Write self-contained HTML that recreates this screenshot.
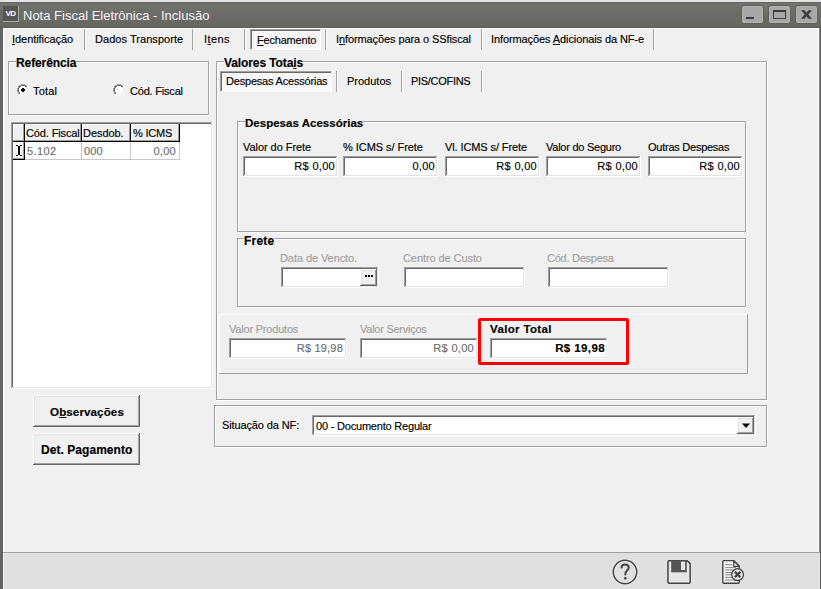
<!DOCTYPE html>
<html><head><meta charset="utf-8"><title>Nota Fiscal Eletrônica - Inclusão</title>
<style>
html,body{margin:0;padding:0;}
body{width:821px;height:589px;overflow:hidden;position:relative;background:#f0f0f0;font-family:"Liberation Sans",sans-serif;font-size:11px;color:#000}
.a{position:absolute}
.t{position:absolute;white-space:pre;line-height:normal;-webkit-text-stroke:0.15px currentColor}
u{text-decoration:underline;text-underline-offset:1px}
</style></head><body>
<div class="a" style="left:0px;top:0px;width:821px;height:2px;background:#e4e4e4"></div>
<div class="a" style="left:0px;top:2px;width:821px;height:26px;background:linear-gradient(#656565 0,#656565 1px,#72726e 1px,#6b6b67 50%,#656561 calc(100% - 1px),#5c5c58 calc(100% - 1px))"></div>
<div class="a" style="left:0px;top:28px;width:3px;height:561px;background:#646464"></div>
<div class="a" style="left:819px;top:28px;width:2px;height:561px;background:#5c5c5c"></div>
<div class="a" style="left:3px;top:28px;width:816px;height:524px;background:#f0f0f0"></div>
<div class="a" style="left:3px;top:28px;width:816px;height:1px;background:#fff"></div>
<div class="a" style="left:3px;top:28px;width:1px;height:524px;background:#fff"></div>
<div class="a" style="left:3px;top:552px;width:816px;height:37px;background:#e0e0e0"></div>
<div class="a" style="left:3px;top:552px;width:816px;height:1px;background:#a0a0a0"></div>
<div class="a" style="left:3px;top:553px;width:1px;height:36px;background:#f0f0f0"></div>
<div class="a" style="left:818px;top:29px;width:1px;height:523px;background:#f5f5f5"></div>
<div class="a" style="left:819px;top:28px;width:1px;height:524px;background:#8a8a8a"></div>
<div class="a" style="left:819px;top:553px;width:1px;height:36px;background:#e8e8e8"></div>
<div class="a" style="left:819px;top:552px;width:1px;height:1px;background:#a0a0a0"></div>
<div class="a" style="left:3px;top:6px;width:15px;height:15px;background:#555;border-right:1px solid #aaa;border-bottom:1px solid #aaa;color:#fff;font-size:8px;font-weight:700;line-height:16px;text-align:center;letter-spacing:-0.6px">VD</div>
<span class="t" style="left:23px;top:8px;font-size:13px;color:#f4f4f4;-webkit-text-stroke:0;">Nota Fiscal Eletrônica - Inclusão</span>
<div class="a" style="left:741px;top:5px;width:23px;height:19px;box-sizing:border-box;background:#a8a8a8;border:1px solid #5e5e5e;border-radius:3px;box-shadow:inset 0 0 0 1px #b4b4b4"></div>
<div class="a" style="left:768px;top:5px;width:23px;height:19px;box-sizing:border-box;background:#a8a8a8;border:1px solid #5e5e5e;border-radius:3px;box-shadow:inset 0 0 0 1px #b4b4b4"></div>
<div class="a" style="left:795px;top:5px;width:23px;height:19px;box-sizing:border-box;background:#a8a8a8;border:1px solid #5e5e5e;border-radius:3px;box-shadow:inset 0 0 0 1px #b4b4b4"></div>
<div class="a" style="left:746px;top:17px;width:8px;height:2px;background:#3c3c3c"></div>
<div class="a" style="left:773px;top:10px;width:13px;height:9px;border:1px solid #3c3c3c;border-top-width:2px;box-sizing:border-box"></div>
<svg class="a" style="left:800px;top:9px" width="14" height="11" viewBox="0 0 14 11"><path d="M1 1.2 H4.6 L6.5 3.8 L8.4 1.2 H12 L8.3 5.5 L12 9.8 H8.4 L6.5 7.2 L4.6 9.8 H1 L4.7 5.5 Z" fill="#3c3c3c"/></svg>
<div class="a" style="left:84px;top:29px;width:1px;height:21px;background:#a0a0a0"></div>
<div class="a" style="left:85px;top:29px;width:1px;height:21px;background:#fff"></div>
<div class="a" style="left:192px;top:29px;width:1px;height:21px;background:#a0a0a0"></div>
<div class="a" style="left:193px;top:29px;width:1px;height:21px;background:#fff"></div>
<div class="a" style="left:244px;top:29px;width:1px;height:21px;background:#a0a0a0"></div>
<div class="a" style="left:245px;top:29px;width:1px;height:21px;background:#fff"></div>
<div class="a" style="left:325px;top:29px;width:1px;height:21px;background:#a0a0a0"></div>
<div class="a" style="left:326px;top:29px;width:1px;height:21px;background:#fff"></div>
<div class="a" style="left:481px;top:29px;width:1px;height:21px;background:#a0a0a0"></div>
<div class="a" style="left:482px;top:29px;width:1px;height:21px;background:#fff"></div>
<div class="a" style="left:653px;top:29px;width:1px;height:21px;background:#a0a0a0"></div>
<div class="a" style="left:654px;top:29px;width:1px;height:21px;background:#fff"></div>
<div class="a" style="left:250px;top:29px;width:71px;height:21px;box-sizing:border-box;border:1px solid;border-color:#a0a0a0 #fff #fff #a0a0a0;box-shadow:inset 1px 1px #696969;background-color:#f7f7f7;background-image:repeating-conic-gradient(#fff 0 25%,#f0f0f0 0 50%);background-size:2px 2px"></div>
<span class="t" style="left:12px;top:33px;font-size:11px;letter-spacing:-0.05px;"><u>I</u>dentificação</span>
<span class="t" style="left:95px;top:33px;font-size:11px;letter-spacing:0.05px;">Dados Transporte</span>
<span class="t" style="left:204px;top:33px;font-size:11px;letter-spacing:0.4px;">I<u>t</u>ens</span>
<span class="t" style="left:257px;top:34px;font-size:11px;letter-spacing:-0.2px;"><u>F</u>echamento</span>
<span class="t" style="left:336px;top:33px;font-size:11px;letter-spacing:-0.1px;">I<u>n</u>formações para o SSfiscal</span>
<span class="t" style="left:491px;top:33px;font-size:11px;letter-spacing:-0.1px;">Informações <u>A</u>dicionais da NF-e</span>
<div class="a" style="left:9px;top:62px;width:201px;height:1px;background:#fff"></div>
<div class="a" style="left:9px;top:62px;width:1px;height:54px;background:#fff"></div>
<div class="a" style="left:9px;top:115px;width:201px;height:1px;background:#fff"></div>
<div class="a" style="left:209px;top:62px;width:1px;height:54px;background:#fff"></div>
<div class="a" style="left:8px;top:61px;width:201px;height:1px;background:#a0a0a0"></div>
<div class="a" style="left:8px;top:61px;width:1px;height:54px;background:#a0a0a0"></div>
<div class="a" style="left:8px;top:114px;width:201px;height:1px;background:#a0a0a0"></div>
<div class="a" style="left:208px;top:61px;width:1px;height:54px;background:#a0a0a0"></div>
<span class="t" style="left:16px;top:56px;font-size:12px;font-weight:700;letter-spacing:-0.1px;background:#f0f0f0;">Referência</span>
<svg class="a" style="left:17px;top:84px" width="12" height="12" shape-rendering="crispEdges"><rect x="4" y="2" width="4" height="1" fill="#ffffff"/><rect x="3" y="3" width="6" height="1" fill="#ffffff"/><rect x="2" y="4" width="8" height="1" fill="#ffffff"/><rect x="2" y="5" width="8" height="1" fill="#ffffff"/><rect x="2" y="6" width="8" height="1" fill="#ffffff"/><rect x="2" y="7" width="8" height="1" fill="#ffffff"/><rect x="3" y="8" width="6" height="1" fill="#ffffff"/><rect x="4" y="9" width="4" height="1" fill="#ffffff"/><rect x="4" y="0" width="4" height="1" fill="#a0a0a0"/><rect x="2" y="1" width="2" height="1" fill="#a0a0a0"/><rect x="8" y="1" width="2" height="1" fill="#a0a0a0"/><rect x="1" y="2" width="1" height="1" fill="#a0a0a0"/><rect x="1" y="3" width="1" height="1" fill="#a0a0a0"/><rect x="0" y="4" width="1" height="1" fill="#a0a0a0"/><rect x="0" y="5" width="1" height="1" fill="#a0a0a0"/><rect x="0" y="6" width="1" height="1" fill="#a0a0a0"/><rect x="0" y="7" width="1" height="1" fill="#a0a0a0"/><rect x="1" y="8" width="1" height="1" fill="#a0a0a0"/><rect x="1" y="9" width="1" height="1" fill="#a0a0a0"/><rect x="4" y="1" width="4" height="1" fill="#696969"/><rect x="2" y="2" width="2" height="1" fill="#696969"/><rect x="8" y="2" width="2" height="1" fill="#696969"/><rect x="2" y="3" width="1" height="1" fill="#696969"/><rect x="1" y="4" width="1" height="1" fill="#696969"/><rect x="1" y="5" width="1" height="1" fill="#696969"/><rect x="1" y="6" width="1" height="1" fill="#696969"/><rect x="1" y="7" width="1" height="1" fill="#696969"/><rect x="2" y="8" width="1" height="1" fill="#696969"/><rect x="2" y="9" width="1" height="1" fill="#696969"/><rect x="4" y="11" width="4" height="1" fill="#ffffff"/><rect x="2" y="10" width="2" height="1" fill="#ffffff"/><rect x="8" y="10" width="2" height="1" fill="#ffffff"/><rect x="10" y="9" width="1" height="1" fill="#ffffff"/><rect x="10" y="8" width="1" height="1" fill="#ffffff"/><rect x="11" y="4" width="1" height="1" fill="#ffffff"/><rect x="11" y="5" width="1" height="1" fill="#ffffff"/><rect x="11" y="6" width="1" height="1" fill="#ffffff"/><rect x="11" y="7" width="1" height="1" fill="#ffffff"/><rect x="10" y="3" width="1" height="1" fill="#ffffff"/><rect x="10" y="2" width="1" height="1" fill="#ffffff"/><rect x="4" y="10" width="4" height="1" fill="#e3e3e3"/><rect x="8" y="9" width="2" height="1" fill="#e3e3e3"/><rect x="9" y="8" width="1" height="1" fill="#e3e3e3"/><rect x="9" y="3" width="1" height="1" fill="#e3e3e3"/><rect x="10" y="4" width="1" height="1" fill="#e3e3e3"/><rect x="10" y="5" width="1" height="1" fill="#e3e3e3"/><rect x="10" y="6" width="1" height="1" fill="#e3e3e3"/><rect x="10" y="7" width="1" height="1" fill="#e3e3e3"/><rect x="5" y="4" width="2" height="1" fill="#000"/><rect x="4" y="5" width="4" height="1" fill="#000"/><rect x="4" y="6" width="4" height="1" fill="#000"/><rect x="5" y="7" width="2" height="1" fill="#000"/></svg>
<svg class="a" style="left:113px;top:84px" width="12" height="12" shape-rendering="crispEdges"><rect x="4" y="2" width="4" height="1" fill="#ffffff"/><rect x="3" y="3" width="6" height="1" fill="#ffffff"/><rect x="2" y="4" width="8" height="1" fill="#ffffff"/><rect x="2" y="5" width="8" height="1" fill="#ffffff"/><rect x="2" y="6" width="8" height="1" fill="#ffffff"/><rect x="2" y="7" width="8" height="1" fill="#ffffff"/><rect x="3" y="8" width="6" height="1" fill="#ffffff"/><rect x="4" y="9" width="4" height="1" fill="#ffffff"/><rect x="4" y="0" width="4" height="1" fill="#a0a0a0"/><rect x="2" y="1" width="2" height="1" fill="#a0a0a0"/><rect x="8" y="1" width="2" height="1" fill="#a0a0a0"/><rect x="1" y="2" width="1" height="1" fill="#a0a0a0"/><rect x="1" y="3" width="1" height="1" fill="#a0a0a0"/><rect x="0" y="4" width="1" height="1" fill="#a0a0a0"/><rect x="0" y="5" width="1" height="1" fill="#a0a0a0"/><rect x="0" y="6" width="1" height="1" fill="#a0a0a0"/><rect x="0" y="7" width="1" height="1" fill="#a0a0a0"/><rect x="1" y="8" width="1" height="1" fill="#a0a0a0"/><rect x="1" y="9" width="1" height="1" fill="#a0a0a0"/><rect x="4" y="1" width="4" height="1" fill="#696969"/><rect x="2" y="2" width="2" height="1" fill="#696969"/><rect x="8" y="2" width="2" height="1" fill="#696969"/><rect x="2" y="3" width="1" height="1" fill="#696969"/><rect x="1" y="4" width="1" height="1" fill="#696969"/><rect x="1" y="5" width="1" height="1" fill="#696969"/><rect x="1" y="6" width="1" height="1" fill="#696969"/><rect x="1" y="7" width="1" height="1" fill="#696969"/><rect x="2" y="8" width="1" height="1" fill="#696969"/><rect x="2" y="9" width="1" height="1" fill="#696969"/><rect x="4" y="11" width="4" height="1" fill="#ffffff"/><rect x="2" y="10" width="2" height="1" fill="#ffffff"/><rect x="8" y="10" width="2" height="1" fill="#ffffff"/><rect x="10" y="9" width="1" height="1" fill="#ffffff"/><rect x="10" y="8" width="1" height="1" fill="#ffffff"/><rect x="11" y="4" width="1" height="1" fill="#ffffff"/><rect x="11" y="5" width="1" height="1" fill="#ffffff"/><rect x="11" y="6" width="1" height="1" fill="#ffffff"/><rect x="11" y="7" width="1" height="1" fill="#ffffff"/><rect x="10" y="3" width="1" height="1" fill="#ffffff"/><rect x="10" y="2" width="1" height="1" fill="#ffffff"/><rect x="4" y="10" width="4" height="1" fill="#e3e3e3"/><rect x="8" y="9" width="2" height="1" fill="#e3e3e3"/><rect x="9" y="8" width="1" height="1" fill="#e3e3e3"/><rect x="9" y="3" width="1" height="1" fill="#e3e3e3"/><rect x="10" y="4" width="1" height="1" fill="#e3e3e3"/><rect x="10" y="5" width="1" height="1" fill="#e3e3e3"/><rect x="10" y="6" width="1" height="1" fill="#e3e3e3"/><rect x="10" y="7" width="1" height="1" fill="#e3e3e3"/></svg>
<span class="t" style="left:33px;top:85px;font-size:11px;letter-spacing:0.2px;">Total</span>
<span class="t" style="left:130px;top:85px;font-size:11px;letter-spacing:-0.2px;">Cód. Fiscal</span>
<div class="a" style="left:11px;top:122px;width:202px;height:267px;background:#fff"></div>
<div class="a" style="left:11px;top:122px;width:202px;height:1px;background:#a0a0a0"></div>
<div class="a" style="left:11px;top:122px;width:1px;height:267px;background:#a0a0a0"></div>
<div class="a" style="left:11px;top:388px;width:202px;height:1px;background:#fff"></div>
<div class="a" style="left:212px;top:122px;width:1px;height:267px;background:#fff"></div>
<div class="a" style="left:12px;top:123px;width:200px;height:1px;background:#696969"></div>
<div class="a" style="left:12px;top:123px;width:1px;height:265px;background:#696969"></div>
<div class="a" style="left:12px;top:387px;width:200px;height:1px;background:#e3e3e3"></div>
<div class="a" style="left:211px;top:123px;width:1px;height:265px;background:#e3e3e3"></div>
<div class="a" style="left:13px;top:124px;width:12px;height:18px;background:#f0f0f0"></div>
<div class="a" style="left:13px;top:124px;width:12px;height:1px;background:#fff"></div>
<div class="a" style="left:13px;top:124px;width:1px;height:18px;background:#fff"></div>
<div class="a" style="left:13px;top:140px;width:11px;height:1px;background:#a0a0a0"></div>
<div class="a" style="left:23px;top:124px;width:1px;height:17px;background:#a0a0a0"></div>
<div class="a" style="left:13px;top:141px;width:12px;height:1px;background:#000"></div>
<div class="a" style="left:24px;top:124px;width:1px;height:18px;background:#000"></div>
<div class="a" style="left:25px;top:124px;width:57px;height:18px;background:#f0f0f0"></div>
<div class="a" style="left:25px;top:124px;width:57px;height:1px;background:#fff"></div>
<div class="a" style="left:25px;top:124px;width:1px;height:18px;background:#fff"></div>
<div class="a" style="left:25px;top:140px;width:56px;height:1px;background:#a0a0a0"></div>
<div class="a" style="left:80px;top:124px;width:1px;height:17px;background:#a0a0a0"></div>
<div class="a" style="left:25px;top:141px;width:57px;height:1px;background:#000"></div>
<div class="a" style="left:81px;top:124px;width:1px;height:18px;background:#000"></div>
<div class="a" style="left:82px;top:124px;width:49px;height:18px;background:#f0f0f0"></div>
<div class="a" style="left:82px;top:124px;width:49px;height:1px;background:#fff"></div>
<div class="a" style="left:82px;top:124px;width:1px;height:18px;background:#fff"></div>
<div class="a" style="left:82px;top:140px;width:48px;height:1px;background:#a0a0a0"></div>
<div class="a" style="left:129px;top:124px;width:1px;height:17px;background:#a0a0a0"></div>
<div class="a" style="left:82px;top:141px;width:49px;height:1px;background:#000"></div>
<div class="a" style="left:130px;top:124px;width:1px;height:18px;background:#000"></div>
<div class="a" style="left:131px;top:124px;width:49px;height:18px;background:#f0f0f0"></div>
<div class="a" style="left:131px;top:124px;width:49px;height:1px;background:#fff"></div>
<div class="a" style="left:131px;top:124px;width:1px;height:18px;background:#fff"></div>
<div class="a" style="left:131px;top:140px;width:48px;height:1px;background:#a0a0a0"></div>
<div class="a" style="left:178px;top:124px;width:1px;height:17px;background:#a0a0a0"></div>
<div class="a" style="left:131px;top:141px;width:49px;height:1px;background:#000"></div>
<div class="a" style="left:179px;top:124px;width:1px;height:18px;background:#000"></div>
<div class="a" style="left:13px;top:142px;width:12px;height:18px;background:#f0f0f0"></div>
<div class="a" style="left:13px;top:142px;width:12px;height:1px;background:#fff"></div>
<div class="a" style="left:13px;top:142px;width:1px;height:18px;background:#fff"></div>
<div class="a" style="left:13px;top:158px;width:11px;height:1px;background:#a0a0a0"></div>
<div class="a" style="left:23px;top:142px;width:1px;height:17px;background:#a0a0a0"></div>
<div class="a" style="left:13px;top:159px;width:12px;height:1px;background:#000"></div>
<div class="a" style="left:24px;top:142px;width:1px;height:18px;background:#000"></div>
<div class="a" style="left:81px;top:142px;width:1px;height:17px;background:#c8c8c8"></div>
<div class="a" style="left:130px;top:142px;width:1px;height:17px;background:#c8c8c8"></div>
<div class="a" style="left:179px;top:142px;width:1px;height:17px;background:#c8c8c8"></div>
<div class="a" style="left:25px;top:159px;width:155px;height:1px;background:#c8c8c8"></div>
<span class="t" style="left:26px;top:127px;font-size:11px;letter-spacing:-0.12px;">Cód. Fiscal</span>
<span class="t" style="left:83px;top:127px;font-size:11px;letter-spacing:-0.05px;">Desdob.</span>
<span class="t" style="left:133px;top:127px;font-size:11px;letter-spacing:-0.2px;">% ICMS</span>
<span class="t" style="left:27px;top:145px;font-size:11px;color:#6d6d6d;letter-spacing:0.4px;">5.102</span>
<span class="t" style="left:84px;top:145px;font-size:11px;color:#6d6d6d;letter-spacing:0.1px;">000</span>
<span class="t" style="right:645px;top:145px;font-size:11px;color:#6d6d6d;letter-spacing:0.3px;">0,00</span>
<svg class="a" style="left:15px;top:144px" width="8" height="13" shape-rendering="crispEdges"><rect x="1" y="0" width="6" height="1" fill="#fff"/><rect x="0" y="1" width="8" height="1" fill="#fff"/><rect x="1" y="12" width="6" height="1" fill="#fff"/><rect x="0" y="11" width="8" height="1" fill="#fff"/><rect x="2" y="2" width="4" height="9" fill="#fff"/><rect x="1" y="1" width="2" height="1" fill="#000"/><rect x="5" y="1" width="2" height="1" fill="#000"/><rect x="1" y="11" width="2" height="1" fill="#000"/><rect x="5" y="11" width="2" height="1" fill="#000"/><rect x="3" y="2" width="2" height="9" fill="#000"/></svg>
<div class="a" style="left:33px;top:395px;width:107px;height:32px;background:#f0f0f0"></div>
<div class="a" style="left:33px;top:395px;width:107px;height:1px;background:#fff"></div>
<div class="a" style="left:33px;top:395px;width:1px;height:32px;background:#fff"></div>
<div class="a" style="left:33px;top:426px;width:107px;height:1px;background:#696969"></div>
<div class="a" style="left:139px;top:395px;width:1px;height:32px;background:#696969"></div>
<div class="a" style="left:34px;top:396px;width:105px;height:1px;background:#e3e3e3"></div>
<div class="a" style="left:34px;top:396px;width:1px;height:30px;background:#e3e3e3"></div>
<div class="a" style="left:34px;top:425px;width:105px;height:1px;background:#a0a0a0"></div>
<div class="a" style="left:138px;top:396px;width:1px;height:30px;background:#a0a0a0"></div>
<div class="a" style="left:33px;top:433px;width:107px;height:32px;background:#f0f0f0"></div>
<div class="a" style="left:33px;top:433px;width:107px;height:1px;background:#fff"></div>
<div class="a" style="left:33px;top:433px;width:1px;height:32px;background:#fff"></div>
<div class="a" style="left:33px;top:464px;width:107px;height:1px;background:#696969"></div>
<div class="a" style="left:139px;top:433px;width:1px;height:32px;background:#696969"></div>
<div class="a" style="left:34px;top:434px;width:105px;height:1px;background:#e3e3e3"></div>
<div class="a" style="left:34px;top:434px;width:1px;height:30px;background:#e3e3e3"></div>
<div class="a" style="left:34px;top:463px;width:105px;height:1px;background:#a0a0a0"></div>
<div class="a" style="left:138px;top:434px;width:1px;height:30px;background:#a0a0a0"></div>
<span class="t" style="left:50px;top:405px;font-size:11.6px;font-weight:700;letter-spacing:0.1px;">O<u>b</u>servações</span>
<span class="t" style="left:41px;top:443px;font-size:12px;font-weight:700;letter-spacing:0.05px;">Det. Pagamento</span>
<div class="a" style="left:217px;top:62px;width:551px;height:1px;background:#fff"></div>
<div class="a" style="left:217px;top:62px;width:1px;height:339px;background:#fff"></div>
<div class="a" style="left:217px;top:400px;width:551px;height:1px;background:#fff"></div>
<div class="a" style="left:767px;top:62px;width:1px;height:339px;background:#fff"></div>
<div class="a" style="left:216px;top:61px;width:551px;height:1px;background:#a0a0a0"></div>
<div class="a" style="left:216px;top:61px;width:1px;height:339px;background:#a0a0a0"></div>
<div class="a" style="left:216px;top:399px;width:551px;height:1px;background:#a0a0a0"></div>
<div class="a" style="left:766px;top:61px;width:1px;height:339px;background:#a0a0a0"></div>
<span class="t" style="left:224px;top:56px;font-size:12px;font-weight:700;letter-spacing:-0.1px;background:#f0f0f0;">Valores Tota<u>i</u>s</span>
<div class="a" style="left:220px;top:71px;width:112px;height:21px;box-sizing:border-box;border:1px solid;border-color:#a0a0a0 #fff #fff #a0a0a0;box-shadow:inset 1px 1px #696969;background-color:#f7f7f7;background-image:repeating-conic-gradient(#fff 0 25%,#f0f0f0 0 50%);background-size:2px 2px"></div>
<div class="a" style="left:336px;top:71px;width:1px;height:21px;background:#a0a0a0"></div>
<div class="a" style="left:337px;top:71px;width:1px;height:21px;background:#fff"></div>
<div class="a" style="left:401px;top:71px;width:1px;height:21px;background:#a0a0a0"></div>
<div class="a" style="left:402px;top:71px;width:1px;height:21px;background:#fff"></div>
<div class="a" style="left:481px;top:71px;width:1px;height:21px;background:#a0a0a0"></div>
<div class="a" style="left:482px;top:71px;width:1px;height:21px;background:#fff"></div>
<span class="t" style="left:226px;top:75px;font-size:11px;letter-spacing:-0.2px;">Despesas Acessórias</span>
<span class="t" style="left:347px;top:75px;font-size:11px;">Produtos</span>
<span class="t" style="left:411px;top:75px;font-size:11px;letter-spacing:-0.3px;">PIS/COFINS</span>
<div class="a" style="left:238px;top:122px;width:509px;height:1px;background:#fff"></div>
<div class="a" style="left:238px;top:122px;width:1px;height:111px;background:#fff"></div>
<div class="a" style="left:238px;top:232px;width:509px;height:1px;background:#fff"></div>
<div class="a" style="left:746px;top:122px;width:1px;height:111px;background:#fff"></div>
<div class="a" style="left:237px;top:121px;width:509px;height:1px;background:#a0a0a0"></div>
<div class="a" style="left:237px;top:121px;width:1px;height:111px;background:#a0a0a0"></div>
<div class="a" style="left:237px;top:231px;width:509px;height:1px;background:#a0a0a0"></div>
<div class="a" style="left:745px;top:121px;width:1px;height:111px;background:#a0a0a0"></div>
<span class="t" style="left:245px;top:117px;font-size:11.5px;font-weight:700;letter-spacing:0.02px;background:#f0f0f0;">Despesas Acessórias</span>
<span class="t" style="left:243px;top:141px;font-size:11px;letter-spacing:-0.05px;">Valor do Frete</span>
<div class="a" style="left:243px;top:156px;width:95px;height:21px;background:#fff"></div>
<div class="a" style="left:243px;top:156px;width:95px;height:1px;background:#a0a0a0"></div>
<div class="a" style="left:243px;top:156px;width:1px;height:21px;background:#a0a0a0"></div>
<div class="a" style="left:243px;top:176px;width:95px;height:1px;background:#fff"></div>
<div class="a" style="left:337px;top:156px;width:1px;height:21px;background:#fff"></div>
<div class="a" style="left:244px;top:157px;width:93px;height:1px;background:#696969"></div>
<div class="a" style="left:244px;top:157px;width:1px;height:19px;background:#696969"></div>
<div class="a" style="left:244px;top:175px;width:93px;height:1px;background:#e3e3e3"></div>
<div class="a" style="left:336px;top:157px;width:1px;height:19px;background:#e3e3e3"></div>
<span class="t" style="right:486px;top:160px;font-size:11px;letter-spacing:0.3px;">R$ 0,00</span>
<span class="t" style="left:343px;top:141px;font-size:11px;letter-spacing:-0.05px;">% ICMS s/ Frete</span>
<div class="a" style="left:343px;top:156px;width:95px;height:21px;background:#fff"></div>
<div class="a" style="left:343px;top:156px;width:95px;height:1px;background:#a0a0a0"></div>
<div class="a" style="left:343px;top:156px;width:1px;height:21px;background:#a0a0a0"></div>
<div class="a" style="left:343px;top:176px;width:95px;height:1px;background:#fff"></div>
<div class="a" style="left:437px;top:156px;width:1px;height:21px;background:#fff"></div>
<div class="a" style="left:344px;top:157px;width:93px;height:1px;background:#696969"></div>
<div class="a" style="left:344px;top:157px;width:1px;height:19px;background:#696969"></div>
<div class="a" style="left:344px;top:175px;width:93px;height:1px;background:#e3e3e3"></div>
<div class="a" style="left:436px;top:157px;width:1px;height:19px;background:#e3e3e3"></div>
<span class="t" style="right:386px;top:160px;font-size:11px;letter-spacing:0.3px;">0,00</span>
<span class="t" style="left:445px;top:141px;font-size:11px;letter-spacing:-0.1px;">Vl. ICMS s/ Frete</span>
<div class="a" style="left:445px;top:156px;width:95px;height:21px;background:#fff"></div>
<div class="a" style="left:445px;top:156px;width:95px;height:1px;background:#a0a0a0"></div>
<div class="a" style="left:445px;top:156px;width:1px;height:21px;background:#a0a0a0"></div>
<div class="a" style="left:445px;top:176px;width:95px;height:1px;background:#fff"></div>
<div class="a" style="left:539px;top:156px;width:1px;height:21px;background:#fff"></div>
<div class="a" style="left:446px;top:157px;width:93px;height:1px;background:#696969"></div>
<div class="a" style="left:446px;top:157px;width:1px;height:19px;background:#696969"></div>
<div class="a" style="left:446px;top:175px;width:93px;height:1px;background:#e3e3e3"></div>
<div class="a" style="left:538px;top:157px;width:1px;height:19px;background:#e3e3e3"></div>
<span class="t" style="right:284px;top:160px;font-size:11px;letter-spacing:0.3px;">R$ 0,00</span>
<span class="t" style="left:546px;top:141px;font-size:11px;letter-spacing:-0.25px;">Valor do Seguro</span>
<div class="a" style="left:546px;top:156px;width:95px;height:21px;background:#fff"></div>
<div class="a" style="left:546px;top:156px;width:95px;height:1px;background:#a0a0a0"></div>
<div class="a" style="left:546px;top:156px;width:1px;height:21px;background:#a0a0a0"></div>
<div class="a" style="left:546px;top:176px;width:95px;height:1px;background:#fff"></div>
<div class="a" style="left:640px;top:156px;width:1px;height:21px;background:#fff"></div>
<div class="a" style="left:547px;top:157px;width:93px;height:1px;background:#696969"></div>
<div class="a" style="left:547px;top:157px;width:1px;height:19px;background:#696969"></div>
<div class="a" style="left:547px;top:175px;width:93px;height:1px;background:#e3e3e3"></div>
<div class="a" style="left:639px;top:157px;width:1px;height:19px;background:#e3e3e3"></div>
<span class="t" style="right:183px;top:160px;font-size:11px;letter-spacing:0.3px;">R$ 0,00</span>
<span class="t" style="left:648px;top:141px;font-size:11px;letter-spacing:-0.25px;">Outras Despesas</span>
<div class="a" style="left:648px;top:156px;width:95px;height:21px;background:#fff"></div>
<div class="a" style="left:648px;top:156px;width:95px;height:1px;background:#a0a0a0"></div>
<div class="a" style="left:648px;top:156px;width:1px;height:21px;background:#a0a0a0"></div>
<div class="a" style="left:648px;top:176px;width:95px;height:1px;background:#fff"></div>
<div class="a" style="left:742px;top:156px;width:1px;height:21px;background:#fff"></div>
<div class="a" style="left:649px;top:157px;width:93px;height:1px;background:#696969"></div>
<div class="a" style="left:649px;top:157px;width:1px;height:19px;background:#696969"></div>
<div class="a" style="left:649px;top:175px;width:93px;height:1px;background:#e3e3e3"></div>
<div class="a" style="left:741px;top:157px;width:1px;height:19px;background:#e3e3e3"></div>
<span class="t" style="right:81px;top:160px;font-size:11px;letter-spacing:0.3px;">R$ 0,00</span>
<div class="a" style="left:238px;top:239px;width:509px;height:1px;background:#fff"></div>
<div class="a" style="left:238px;top:239px;width:1px;height:69px;background:#fff"></div>
<div class="a" style="left:238px;top:307px;width:509px;height:1px;background:#fff"></div>
<div class="a" style="left:746px;top:239px;width:1px;height:69px;background:#fff"></div>
<div class="a" style="left:237px;top:238px;width:509px;height:1px;background:#a0a0a0"></div>
<div class="a" style="left:237px;top:238px;width:1px;height:69px;background:#a0a0a0"></div>
<div class="a" style="left:237px;top:306px;width:509px;height:1px;background:#a0a0a0"></div>
<div class="a" style="left:745px;top:238px;width:1px;height:69px;background:#a0a0a0"></div>
<span class="t" style="left:244px;top:234px;font-size:12px;font-weight:700;letter-spacing:0.2px;background:#f0f0f0;">Frete</span>
<span class="t" style="left:280px;top:252px;font-size:11px;color:#a0a0a0;letter-spacing:-0.08px;">Data de Vencto.</span>
<span class="t" style="left:403px;top:252px;font-size:11px;color:#a0a0a0;letter-spacing:-0.08px;">Centro de Custo</span>
<span class="t" style="left:547px;top:252px;font-size:11px;color:#a0a0a0;letter-spacing:-0.25px;">Cód. Despesa</span>
<div class="a" style="left:281px;top:267px;width:98px;height:21px;background:#fff"></div>
<div class="a" style="left:281px;top:267px;width:98px;height:1px;background:#a0a0a0"></div>
<div class="a" style="left:281px;top:267px;width:1px;height:21px;background:#a0a0a0"></div>
<div class="a" style="left:281px;top:287px;width:98px;height:1px;background:#fff"></div>
<div class="a" style="left:378px;top:267px;width:1px;height:21px;background:#fff"></div>
<div class="a" style="left:282px;top:268px;width:96px;height:1px;background:#696969"></div>
<div class="a" style="left:282px;top:268px;width:1px;height:19px;background:#696969"></div>
<div class="a" style="left:282px;top:286px;width:96px;height:1px;background:#e3e3e3"></div>
<div class="a" style="left:377px;top:268px;width:1px;height:19px;background:#e3e3e3"></div>
<div class="a" style="left:360px;top:269px;width:17px;height:17px;background:#f0f0f0"></div>
<div class="a" style="left:360px;top:269px;width:17px;height:1px;background:#fff"></div>
<div class="a" style="left:360px;top:269px;width:1px;height:17px;background:#fff"></div>
<div class="a" style="left:360px;top:285px;width:17px;height:1px;background:#696969"></div>
<div class="a" style="left:376px;top:269px;width:1px;height:17px;background:#696969"></div>
<div class="a" style="left:361px;top:270px;width:15px;height:1px;background:#e3e3e3"></div>
<div class="a" style="left:361px;top:270px;width:1px;height:15px;background:#e3e3e3"></div>
<div class="a" style="left:361px;top:284px;width:15px;height:1px;background:#a0a0a0"></div>
<div class="a" style="left:375px;top:270px;width:1px;height:15px;background:#a0a0a0"></div>
<svg class="a" style="left:365px;top:275px" width="9" height="3"><rect x="0" y="0" width="2" height="2" fill="#000"/><rect x="3" y="0" width="2" height="2" fill="#000"/><rect x="6" y="0" width="2" height="2" fill="#000"/></svg>
<div class="a" style="left:404px;top:267px;width:121px;height:21px;background:#fff"></div>
<div class="a" style="left:404px;top:267px;width:121px;height:1px;background:#a0a0a0"></div>
<div class="a" style="left:404px;top:267px;width:1px;height:21px;background:#a0a0a0"></div>
<div class="a" style="left:404px;top:287px;width:121px;height:1px;background:#fff"></div>
<div class="a" style="left:524px;top:267px;width:1px;height:21px;background:#fff"></div>
<div class="a" style="left:405px;top:268px;width:119px;height:1px;background:#696969"></div>
<div class="a" style="left:405px;top:268px;width:1px;height:19px;background:#696969"></div>
<div class="a" style="left:405px;top:286px;width:119px;height:1px;background:#e3e3e3"></div>
<div class="a" style="left:523px;top:268px;width:1px;height:19px;background:#e3e3e3"></div>
<div class="a" style="left:548px;top:267px;width:121px;height:21px;background:#fff"></div>
<div class="a" style="left:548px;top:267px;width:121px;height:1px;background:#a0a0a0"></div>
<div class="a" style="left:548px;top:267px;width:1px;height:21px;background:#a0a0a0"></div>
<div class="a" style="left:548px;top:287px;width:121px;height:1px;background:#fff"></div>
<div class="a" style="left:668px;top:267px;width:1px;height:21px;background:#fff"></div>
<div class="a" style="left:549px;top:268px;width:119px;height:1px;background:#696969"></div>
<div class="a" style="left:549px;top:268px;width:1px;height:19px;background:#696969"></div>
<div class="a" style="left:549px;top:286px;width:119px;height:1px;background:#e3e3e3"></div>
<div class="a" style="left:667px;top:268px;width:1px;height:19px;background:#e3e3e3"></div>
<div class="a" style="left:219px;top:314px;width:529px;height:1px;background:#fff"></div>
<div class="a" style="left:219px;top:314px;width:1px;height:60px;background:#fff"></div>
<div class="a" style="left:219px;top:373px;width:529px;height:1px;background:#a0a0a0"></div>
<div class="a" style="left:747px;top:314px;width:1px;height:60px;background:#a0a0a0"></div>
<span class="t" style="left:229px;top:323px;font-size:11px;color:#a0a0a0;letter-spacing:-0.2px;">Valor Produtos</span>
<span class="t" style="left:360px;top:323px;font-size:11px;color:#a0a0a0;letter-spacing:-0.25px;">Valor Serviços</span>
<div class="a" style="left:229px;top:338px;width:118px;height:21px;background:#fff"></div>
<div class="a" style="left:229px;top:338px;width:118px;height:1px;background:#a0a0a0"></div>
<div class="a" style="left:229px;top:338px;width:1px;height:21px;background:#a0a0a0"></div>
<div class="a" style="left:229px;top:358px;width:118px;height:1px;background:#fff"></div>
<div class="a" style="left:346px;top:338px;width:1px;height:21px;background:#fff"></div>
<div class="a" style="left:230px;top:339px;width:116px;height:1px;background:#696969"></div>
<div class="a" style="left:230px;top:339px;width:1px;height:19px;background:#696969"></div>
<div class="a" style="left:230px;top:357px;width:116px;height:1px;background:#e3e3e3"></div>
<div class="a" style="left:345px;top:339px;width:1px;height:19px;background:#e3e3e3"></div>
<div class="a" style="left:360px;top:338px;width:118px;height:21px;background:#fff"></div>
<div class="a" style="left:360px;top:338px;width:118px;height:1px;background:#a0a0a0"></div>
<div class="a" style="left:360px;top:338px;width:1px;height:21px;background:#a0a0a0"></div>
<div class="a" style="left:360px;top:358px;width:118px;height:1px;background:#fff"></div>
<div class="a" style="left:477px;top:338px;width:1px;height:21px;background:#fff"></div>
<div class="a" style="left:361px;top:339px;width:116px;height:1px;background:#696969"></div>
<div class="a" style="left:361px;top:339px;width:1px;height:19px;background:#696969"></div>
<div class="a" style="left:361px;top:357px;width:116px;height:1px;background:#e3e3e3"></div>
<div class="a" style="left:476px;top:339px;width:1px;height:19px;background:#e3e3e3"></div>
<span class="t" style="right:478px;top:342px;font-size:11px;color:#6d6d6d;letter-spacing:0.2px;">R$ 19,98</span>
<span class="t" style="right:347px;top:342px;font-size:11px;color:#6d6d6d;letter-spacing:0.3px;">R$ 0,00</span>
<div class="a" style="left:478px;top:318px;width:151px;height:47px;box-sizing:border-box;border:3px solid #ff0000;border-radius:2px"></div>
<span class="t" style="left:490px;top:323px;font-size:11.5px;font-weight:700;letter-spacing:0.35px;">Valor Total</span>
<div class="a" style="left:490px;top:338px;width:118px;height:21px;background:#fff"></div>
<div class="a" style="left:490px;top:338px;width:118px;height:1px;background:#a0a0a0"></div>
<div class="a" style="left:490px;top:338px;width:1px;height:21px;background:#a0a0a0"></div>
<div class="a" style="left:490px;top:358px;width:118px;height:1px;background:#fff"></div>
<div class="a" style="left:607px;top:338px;width:1px;height:21px;background:#fff"></div>
<div class="a" style="left:491px;top:339px;width:116px;height:1px;background:#696969"></div>
<div class="a" style="left:491px;top:339px;width:1px;height:19px;background:#696969"></div>
<div class="a" style="left:491px;top:357px;width:116px;height:1px;background:#e3e3e3"></div>
<div class="a" style="left:606px;top:339px;width:1px;height:19px;background:#e3e3e3"></div>
<span class="t" style="right:216px;top:342px;font-size:11.5px;font-weight:700;letter-spacing:0.4px;">R$ 19,98</span>
<div class="a" style="left:215px;top:406px;width:553px;height:1px;background:#fff"></div>
<div class="a" style="left:215px;top:406px;width:1px;height:42px;background:#fff"></div>
<div class="a" style="left:215px;top:447px;width:553px;height:1px;background:#fff"></div>
<div class="a" style="left:767px;top:406px;width:1px;height:42px;background:#fff"></div>
<div class="a" style="left:214px;top:405px;width:553px;height:1px;background:#a0a0a0"></div>
<div class="a" style="left:214px;top:405px;width:1px;height:42px;background:#a0a0a0"></div>
<div class="a" style="left:214px;top:446px;width:553px;height:1px;background:#a0a0a0"></div>
<div class="a" style="left:766px;top:405px;width:1px;height:42px;background:#a0a0a0"></div>
<span class="t" style="left:222px;top:419px;font-size:11px;letter-spacing:-0.12px;">Situação da NF:</span>
<div class="a" style="left:312px;top:415px;width:444px;height:21px;background:#fff"></div>
<div class="a" style="left:312px;top:415px;width:444px;height:1px;background:#a0a0a0"></div>
<div class="a" style="left:312px;top:415px;width:1px;height:21px;background:#a0a0a0"></div>
<div class="a" style="left:312px;top:435px;width:444px;height:1px;background:#fff"></div>
<div class="a" style="left:755px;top:415px;width:1px;height:21px;background:#fff"></div>
<div class="a" style="left:313px;top:416px;width:442px;height:1px;background:#696969"></div>
<div class="a" style="left:313px;top:416px;width:1px;height:19px;background:#696969"></div>
<div class="a" style="left:313px;top:434px;width:442px;height:1px;background:#e3e3e3"></div>
<div class="a" style="left:754px;top:416px;width:1px;height:19px;background:#e3e3e3"></div>
<span class="t" style="left:316px;top:420px;font-size:11px;letter-spacing:-0.2px;">00 - Documento Regular</span>
<div class="a" style="left:737px;top:417px;width:17px;height:17px;background:#f0f0f0"></div>
<div class="a" style="left:737px;top:417px;width:17px;height:1px;background:#fff"></div>
<div class="a" style="left:737px;top:417px;width:1px;height:17px;background:#fff"></div>
<div class="a" style="left:737px;top:433px;width:17px;height:1px;background:#696969"></div>
<div class="a" style="left:753px;top:417px;width:1px;height:17px;background:#696969"></div>
<div class="a" style="left:738px;top:418px;width:15px;height:1px;background:#e3e3e3"></div>
<div class="a" style="left:738px;top:418px;width:1px;height:15px;background:#e3e3e3"></div>
<div class="a" style="left:738px;top:432px;width:15px;height:1px;background:#a0a0a0"></div>
<div class="a" style="left:752px;top:418px;width:1px;height:15px;background:#a0a0a0"></div>
<svg class="a" style="left:742px;top:423px" width="8" height="6"><path d="M0 0.5 H8 L4 5 Z" fill="#000"/></svg>
<svg class="a" style="left:610px;top:558px" width="30" height="30" viewBox="0 0 30 30">
<circle cx="15" cy="14" r="11.7" fill="none" stroke="#fafafa" stroke-width="3" opacity="0.5"/>
<circle cx="15" cy="14" r="11.7" fill="none" stroke="#444" stroke-width="1.5"/>
<path d="M11.6 9.4 C11.6 7.2 13.2 6.4 15.1 6.4 C17.2 6.4 18.7 7.7 18.7 9.6 C18.7 12.2 15.3 12.6 15.3 16.4" fill="none" stroke="#444" stroke-width="2" stroke-linecap="round"/>
<circle cx="15.2" cy="20.3" r="1.3" fill="#444"/>
</svg>
<svg class="a" style="left:666px;top:559px" width="27" height="27" viewBox="0 0 27 27">
<path d="M3.2 1.65 H21.2 L24.15 4.6 V22.9 Q24.15 24.15 22.9 24.15 H3.2 Q1.95 24.15 1.95 22.9 V2.9 Q1.95 1.65 3.2 1.65 Z" fill="#e6e6e6" stroke="#444" stroke-width="1.5"/>
<rect x="5.2" y="1.5" width="15.6" height="11.8" fill="#555"/>
<rect x="15" y="2.6" width="4.1" height="8.4" fill="#e4e4e4"/>
</svg>
<svg class="a" style="left:720px;top:559px" width="28" height="28" viewBox="0 0 28 28">
<path d="M3.8 1.6 H13.9 L19.3 7 V23.2 Q19.3 24.2 18.3 24.2 H3.8 Q2.8 24.2 2.8 23.2 V2.6 Q2.8 1.6 3.8 1.6 Z" fill="#f2f2f2" stroke="#444" stroke-width="1.4"/>
<path d="M13.7 1.8 V7.3 H19.1 Z" fill="#f4f4f4" stroke="#444" stroke-width="1.2" stroke-linejoin="round"/>
<path d="M5.2 5.7 H12.3 M5.2 8.6 H16 M5.2 10.9 H16 M5.2 13.5 H16 M5.2 15.8 H16 M5.2 18.4 H16 M5.2 21 H16" stroke="#8a8a8a" stroke-width="1"/>
<circle cx="17.6" cy="15.6" r="5.9" fill="#e8e8e8" stroke="#444" stroke-width="1.3"/>
<path d="M14.9 12.9 L20.3 18.3 M20.3 12.9 L14.9 18.3" stroke="#444" stroke-width="2.3"/>
</svg>
</body></html>
